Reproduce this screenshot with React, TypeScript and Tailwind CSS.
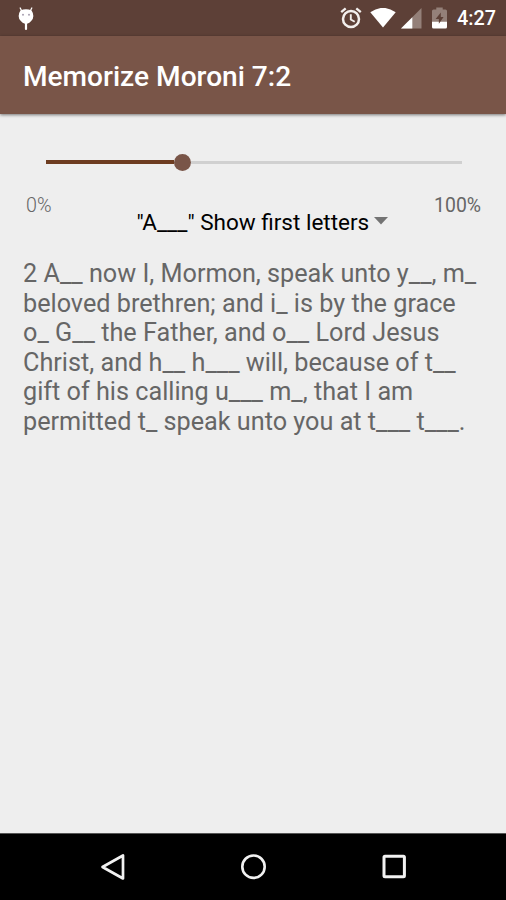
const verseLines = [
  "2 A__ now I, Mormon, speak unto y__, m_",
  "beloved brethren; and i_ is by the grace",
  "o_ G__ the Father, and o__ Lord Jesus",
  "Christ, and h__ h___ will, because of t__",
  "gift of his calling u___ m_, that I am",
  "permitted t_ speak unto you at t___ t___.",
];

function StatusBar() {
  return (
    <div className="flex h-9 shrink-0 items-center bg-[#5d4037] pr-[11px] pl-[17px] text-white">
      <svg width="18" height="26" viewBox="0 0 18 26" className="shrink-0">
        <path
          d="M3.2 3 5 6.5M14.8 3 13 6.5"
          stroke="white"
          strokeWidth="1.3"
          strokeLinecap="round"
        />
        <path
          d="M3.4 5.6Q9 3 14.6 5.6Q18.2 11.4 14.4 15.7Q12.5 18 10.1 18.7V24Q10.1 25 9 25T7.9 24V18.7Q5.5 18 3.6 15.7Q-.2 11.4 3.4 5.6Z"
          fill="white"
        />
        <circle cx="6" cy="9.8" r="1" fill="#a8a0b0" />
        <circle cx="12" cy="9.8" r="1" fill="#a8a0b0" />
      </svg>

      <div className="ml-auto flex items-center">
        <svg width="22" height="22" viewBox="0 0 22 22" fill="none" stroke="#f3efed">
          <circle cx="11" cy="12" r="8" strokeWidth="2.5" />
          <path d="M1.2 5.1 5.7 1.4M20.8 5.1 16.3 1.4" strokeWidth="2.4" />
          <path d="M10.8 7.2V12.5L14.7 14.8" strokeWidth="1.9" />
        </svg>
        <svg width="26" height="20" viewBox="0 0 26 20" className="ml-2">
          <path d="M.3 4.2Q13-4.5 25.7 4.2L13 19.5Z" fill="white" />
        </svg>
        <svg width="22" height="21" viewBox="0 0 22 21" className="ml-1">
          <path d="M21.5 0V20.5H1Z" fill="#948079" />
          <path d="M12.3 9.2V20.5H1Z" fill="white" />
        </svg>
        <svg width="15" height="22" viewBox="0 0 14 22" preserveAspectRatio="none" className="ml-[10px]">
          <path d="M4 2.5V.5H10V2.5H12.5Q14 2.5 14 4V15H0V4Q0 2.5 1.5 2.5Z" fill="#948079" />
          <path d="M0 14.7H14V20Q14 21.5 12.5 21.5H1.5Q0 21.5 0 20Z" fill="white" />
          <path d="M8.2 5.5 3.4 12H6.4V16.8L10.8 10H8.2Z" fill="#5d4037" />
        </svg>
        <span className="mt-[2px] ml-[10px] w-[38px] text-[19.8px] leading-6 font-medium whitespace-nowrap">
          4:27
        </span>
      </div>
    </div>
  );
}

function ProgressSlider() {
  return (
    <div className="mt-[38px] mr-11 ml-[46px] flex h-5 items-center">
      <div className="h-1 w-[128px] bg-[#6d3c20]" />
      <div className="size-[17px] rounded-full bg-[#795548]" />
      <div className="h-[3px] flex-1 bg-[#d0d0d0]" />
    </div>
  );
}

function NavigationBar() {
  return (
    <div className="flex h-[67px] shrink-0 items-center justify-between border-t border-[#555] bg-black px-[98px]">
      <svg width="30" height="30" viewBox="0 0 30 30" fill="none" stroke="#f2f2f2">
        <path d="M25 3.5V26.5L4.5 15Z" strokeWidth="2.7" strokeLinejoin="round" />
      </svg>
      <svg width="30" height="30" viewBox="0 0 30 30" fill="none" stroke="#f2f2f2">
        <circle cx="15.5" cy="14.7" r="11.2" strokeWidth="2.6" />
      </svg>
      <svg width="30" height="30" viewBox="0 0 30 30" fill="none" stroke="#f2f2f2">
        <rect x="6" y="4.3" width="20.4" height="20.4" rx="1" strokeWidth="3" />
      </svg>
    </div>
  );
}

export default function App() {
  return (
    <div className="flex h-[900px] w-[506px] flex-col overflow-hidden bg-[#eeeeee] font-[Roboto,sans-serif]">
      <StatusBar />
      <header className="z-10 flex h-[78px] shrink-0 items-center bg-[#795548] px-[23px] pt-[3px] shadow-[0_1px_3px_rgba(0,0,0,0.5)]">
        <h1 className="text-[28.1px] leading-9 font-medium text-white">Memorize Moroni 7:2</h1>
      </header>

      <main className="flex flex-1 flex-col">
        <ProgressSlider />
        <div className="mt-[21px] flex h-[60px] items-start justify-between pr-[25px] pl-[26px] text-[19.7px] leading-6 text-[#666]">
          <span className="mt-px font-light">0%</span>
          <button className="mt-4 ml-[39px] flex items-center text-[22.5px] leading-[26px] text-black">
            "A___" Show first letters
            <svg width="14" height="8" viewBox="0 0 14 8" className="mb-[3px] ml-[5px]">
              <path d="M0 0H14L7 7.5Z" fill="#737373" />
            </svg>
          </button>
          <span className="mt-px text-[19.4px]">100%</span>
        </div>
        <p className="mt-[6px] px-[23px] text-[25.23px] leading-[29.6px] text-[#666]">
          {verseLines.map((line) => (
            <span key={line} className="block whitespace-nowrap">
              {line}
            </span>
          ))}
        </p>
      </main>

      <NavigationBar />
    </div>
  );
}
